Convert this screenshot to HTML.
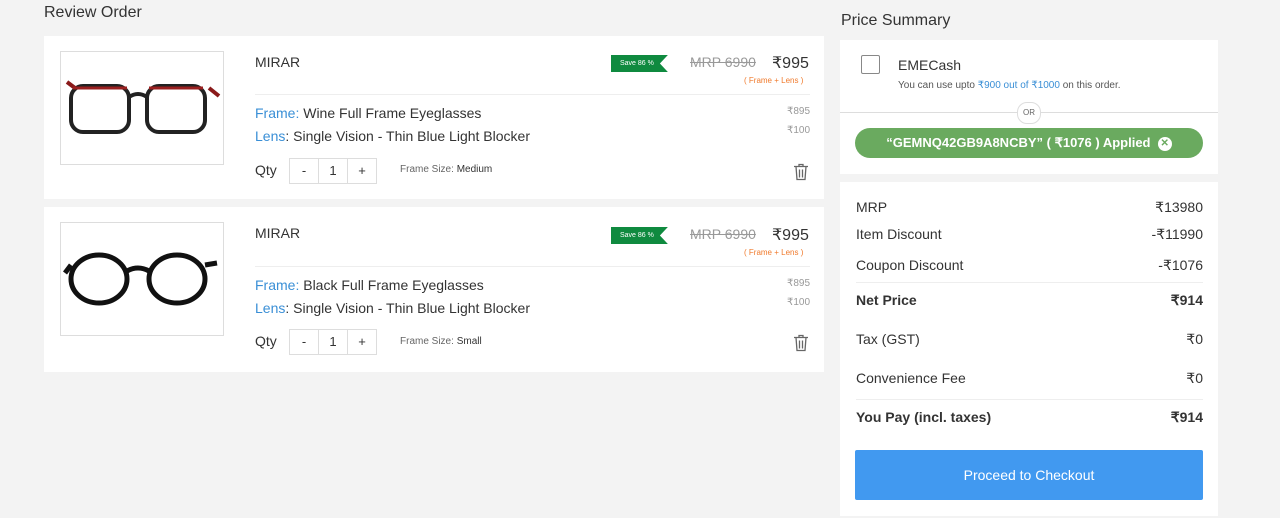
<!DOCTYPE html><html><head><style>
body{margin:0;width:1280px;height:518px;background:#f3f3f3;font-family:"Liberation Sans",sans-serif;color:#333;position:relative;overflow:hidden}
.a{position:absolute}
.card{position:absolute;background:#fff}
.img{position:absolute;left:16px;top:15px;width:162px;height:112px;border:1px solid #ddd;background:#fff}
.t{font-size:14px;color:#333}
.bl{color:#3a8fd6}
.sm{font-size:10px;color:#999}
.qty{position:absolute;display:flex;border:1px solid #ddd;height:24px}
.qty div{width:28px;text-align:center;line-height:24px;font-size:13px;border-right:1px solid #ddd}
.qty div:last-child{border:none}
.save{position:absolute;background:#0f8a3f;color:#fff;font-size:7px;height:17px;line-height:17px;padding:0 14px 0 9px;clip-path:polygon(0 0,100% 0,86% 50%,100% 100%,0 100%)}
.row{position:absolute;left:16px;right:15px;font-size:14px;color:#333;display:flex;justify-content:space-between}
</style></head><body>
<div class="a" style="left:44px;top:4px;font-size:16px;color:#333">Review Order</div>
<div class="a" style="left:841px;top:12px;font-size:16px;color:#333">Price Summary</div>

<div class="card" style="left:44px;top:36px;width:780px;height:163px">
 <div class="img"><svg width="162" height="112" viewBox="0 0 162 112"><g fill="none" stroke="#222" stroke-width="4"><rect x="10" y="34" width="58" height="46" rx="12"/><rect x="86" y="34" width="58" height="46" rx="12"/><path d="M68 45q9-6 18 0"/></g><path d="M14 36 L6 30 M148 36 L158 44" stroke="#8a1a1a" stroke-width="4"/><path d="M12 36h54M88 36h54" stroke="#9a2020" stroke-width="3"/></svg></div>
 <div class="a t" style="left:211px;top:18px">MIRAR</div>
 <div class="save" style="left:567px;top:19px">Save 86 %</div>
 <div class="a" style="left:646px;top:18px;font-size:14px;color:#999;text-decoration:line-through">MRP 6990</div>
 <div class="a" style="left:728px;top:17px;font-size:16px;color:#333">₹995</div>
 <div class="a" style="left:700px;top:40px;font-size:8px;color:#f07a2c">( Frame + Lens )</div>
 <div class="a" style="left:211px;top:58px;width:555px;border-top:1px solid #eee"></div>
 <div class="a t" style="left:211px;top:69px"><span class="bl">Frame:</span> Wine Full Frame Eyeglasses</div>
 <div class="a t" style="left:211px;top:92px"><span class="bl">Lens</span>: Single Vision - Thin Blue Light Blocker</div>
 <div class="a sm" style="left:743px;top:70px">₹895</div>
 <div class="a sm" style="left:743px;top:89px">₹100</div>
 <div class="a t" style="left:211px;top:126px">Qty</div>
 <div class="qty" style="left:245px;top:122px"><div>-</div><div>1</div><div>+</div></div>
 <div class="a" style="left:356px;top:128px;font-size:10px;color:#666">Frame Size: <span style="color:#333">Medium</span></div>
 <svg class="a" style="left:749px;top:127px" width="16" height="18" viewBox="0 0 16 18" fill="none" stroke="#666" stroke-width="1.3"><path d="M1 3.5h14M6 3.5V1.5h4v2M3 3.5l1 13h8l1-13M6.5 6.5v8M9.5 6.5v8"/></svg>
</div>

<div class="card" style="left:44px;top:207px;width:780px;height:165px">
 <div class="img"><svg width="162" height="112" viewBox="0 0 162 112"><g fill="none" stroke="#111" stroke-width="5"><ellipse cx="38" cy="56" rx="28" ry="24"/><ellipse cx="116" cy="56" rx="28" ry="24"/><path d="M66 48q11-6 22 0M10 42 L4 50M144 42 L156 40"/></g></svg></div>
 <div class="a t" style="left:211px;top:18px">MIRAR</div>
 <div class="save" style="left:567px;top:20px">Save 86 %</div>
 <div class="a" style="left:646px;top:19px;font-size:14px;color:#999;text-decoration:line-through">MRP 6990</div>
 <div class="a" style="left:728px;top:18px;font-size:16px;color:#333">₹995</div>
 <div class="a" style="left:700px;top:41px;font-size:8px;color:#f07a2c">( Frame + Lens )</div>
 <div class="a" style="left:211px;top:59px;width:555px;border-top:1px solid #eee"></div>
 <div class="a t" style="left:211px;top:70px"><span class="bl">Frame:</span> Black Full Frame Eyeglasses</div>
 <div class="a t" style="left:211px;top:93px"><span class="bl">Lens</span>: Single Vision - Thin Blue Light Blocker</div>
 <div class="a sm" style="left:743px;top:71px">₹895</div>
 <div class="a sm" style="left:743px;top:90px">₹100</div>
 <div class="a t" style="left:211px;top:126px">Qty</div>
 <div class="qty" style="left:245px;top:122px"><div>-</div><div>1</div><div>+</div></div>
 <div class="a" style="left:356px;top:129px;font-size:10px;color:#666">Frame Size: <span style="color:#333">Small</span></div>
 <svg class="a" style="left:749px;top:127px" width="16" height="18" viewBox="0 0 16 18" fill="none" stroke="#666" stroke-width="1.3"><path d="M1 3.5h14M6 3.5V1.5h4v2M3 3.5l1 13h8l1-13M6.5 6.5v8M9.5 6.5v8"/></svg>
</div>

<div class="card" style="left:840px;top:40px;width:378px;height:134px">
 <div class="a" style="left:21px;top:15px;width:17px;height:17px;border:1px solid #888;border-radius:2px"></div>
 <div class="a" style="left:58px;top:17px;font-size:14px;color:#333">EMECash</div>
 <div class="a" style="left:58px;top:40px;font-size:10px;color:#555">You can use upto <span class="bl">₹900 out of ₹1000</span> on this order.</div>
 <div class="a" style="left:0;top:72px;width:378px;border-top:1px solid #ddd"></div>
 <div class="a" style="left:177px;top:62px;width:22px;height:20px;border:1px solid #ddd;border-radius:10px;background:#fff;font-size:8px;color:#666;text-align:center;line-height:20px">OR</div>
 <div class="a" style="left:15px;top:88px;width:348px;height:30px;border-radius:15px;background:#6aaa5f;color:#fff;font-size:13px;font-weight:bold;line-height:30px;text-align:center">“GEMNQ42GB9A8NCBY” ( ₹1076 ) Applied &nbsp;<span style="display:inline-block;width:14px;height:14px;border-radius:7px;background:#fff;color:#6aaa5f;font-size:10px;line-height:14px;vertical-align:1px">✕</span></div>
</div>

<div class="card" style="left:840px;top:182px;width:378px;height:334px">
 <div class="row" style="top:17px"><span>MRP</span><span>₹13980</span></div>
 <div class="row" style="top:44px"><span>Item Discount</span><span>-₹11990</span></div>
 <div class="row" style="top:75px"><span>Coupon Discount</span><span>-₹1076</span></div>
 <div class="a" style="left:16px;top:100px;width:347px;border-top:1px solid #eee"></div>
 <div class="row" style="top:110px;font-weight:bold"><span>Net Price</span><span>₹914</span></div>
 <div class="row" style="top:149px"><span>Tax (GST)</span><span>₹0</span></div>
 <div class="row" style="top:188px"><span>Convenience Fee</span><span>₹0</span></div>
 <div class="a" style="left:16px;top:217px;width:347px;border-top:1px solid #eee"></div>
 <div class="row" style="top:227px;font-weight:bold"><span>You Pay (incl. taxes)</span><span>₹914</span></div>
 <div class="a" style="left:15px;top:268px;width:348px;height:50px;background:#4199f0;border-radius:2px;color:#fff;font-size:14px;text-align:center;line-height:50px">Proceed to Checkout</div>
</div>
</body></html>
